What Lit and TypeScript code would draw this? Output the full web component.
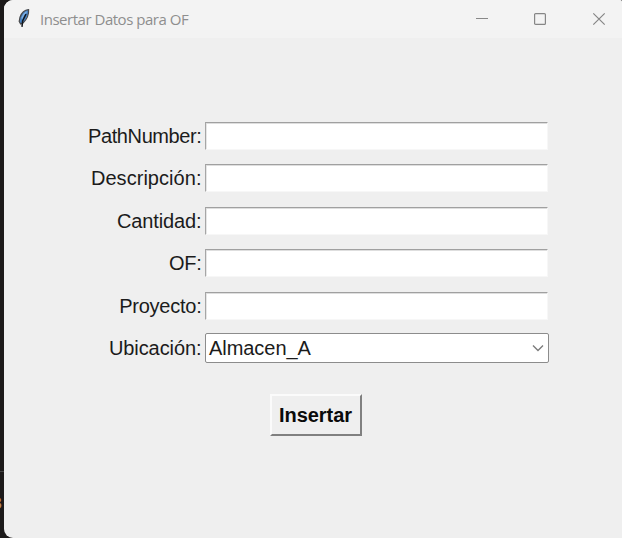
import { LitElement, html, css } from "lit";
import { customElement, property } from "lit/decorators.js";
import { styleMap } from "lit/directives/style-map.js";

@customElement("form-row")
class FormRow extends LitElement {
  @property() label = "";
  @property() value = "";
  @property({ type: Number }) tracking = 0;
  @property({ type: Boolean }) select = false;

  static styles = css`
    :host {
      display: grid;
      grid-template-columns: 197.5px 344px;
      column-gap: 3.5px;
      height: 42.5px;
      align-items: start;
      font: 20px/28px "Liberation Sans", Arial, sans-serif;
      color: #1b1b1b;
    }
    .label { text-align: right; white-space: nowrap; }
    .entry {
      box-sizing: border-box;
      width: 343px;
      height: 28px;
      background: #fff;
      border: 1px solid #f7f7f7;
      border-top-color: #a0a0a0;
      border-left-color: #a6a6a6;
      box-shadow: inset 0 1px #dedede, inset 1px 0 #e6e6e6;
    }
    .combo {
      box-sizing: border-box;
      display: flex;
      justify-content: space-between;
      align-items: center;
      width: 344px;
      height: 30px;
      margin-top: -1px;
      padding: 0 4px 0 3px;
      background: #fff;
      border: 1px solid #8c8c8c;
      border-radius: 2px;
      letter-spacing: -0.05px;
    }
    svg { display: block; }
  `;

  render() {
    return html`
      <div class="label" style=${styleMap({ letterSpacing: `${this.tracking}px` })}>${this.label}:</div>
      ${this.select
        ? html`<div class="combo">
            <span>${this.value}</span>
            <svg width="12" height="8" viewBox="0 0 12 8" fill="none" stroke="#7c7c7c" stroke-width="1.4">
              <path d="M1 1.5 L6 6.5 L11 1.5" />
            </svg>
          </div>`
        : html`<div class="entry"></div>`}
    `;
  }
}

const fields = [
  { label: "PathNumber", tracking: -0.4 },
  { label: "Descripción", tracking: 0.04 },
  { label: "Cantidad", tracking: -0.12 },
  { label: "OF", tracking: -0.3 },
  { label: "Proyecto", tracking: -0.24 },
];

@customElement("app-root")
class AppRoot extends LitElement {
  static styles = css`
    :host {
      display: flex;
      box-sizing: border-box;
      width: 622px;
      height: 538px;
      padding-left: 4px;
      overflow: hidden;
      position: relative;
      background: #1c1a1a;
    }
    .window {
      flex: 1;
      display: flex;
      flex-direction: column;
      background: #efefef;
      border-radius: 9px 2px 0 9px;
      overflow: hidden;
    }
    .bar {
      display: flex;
      align-items: center;
      height: 38px;
      box-sizing: border-box;
      padding: 0 16px 1px 13px;
      background: #f3f3f3;
      color: #8e8e8e;
    }
    .title {
      flex: 1;
      margin-left: 9px;
      font: 15px/20px "Open Sans", "Noto Sans", sans-serif;
      letter-spacing: -0.48px;
    }
    .controls { display: flex; padding-top: 1px; }
    .minimize { margin-right: 44px; }
    .maximize { margin-right: 45px; }
    svg { display: block; }
    .form { padding-top: 83.5px; }
    .actions { display: flex; padding: 17.5px 0 0 266px; }
    .button {
      box-sizing: border-box;
      width: 92px;
      height: 42px;
      border: 2px solid;
      border-color: #fbfbfb #808080 #808080 #fbfbfb;
      background: #efefef;
      font: bold 20px/38px "Liberation Sans", Arial, sans-serif;
      letter-spacing: -0.05px;
      text-indent: -1px;
      text-align: center;
      color: #0a0a0a;
    }
    .rule { position: absolute; left: 0; top: 471px; width: 4px; height: 1px; background: #444; }
    .glyph {
      position: absolute;
      left: -9px;
      top: 494px;
      width: 12px;
      overflow: hidden;
      font: 19px/20px "Liberation Mono", monospace;
      color: #b58a5c;
    }
  `;

  render() {
    return html`
      <div class="window">
        <div class="bar">
          <svg width="14" height="21" viewBox="0 0 14 21">
            <path d="M11.6 1.6 C8.2 1.8 4.6 4.6 3 9.2 L2.2 13.5 L3.6 16 L6 15 C9.6 11.5 12 6.5 11.6 1.6Z" fill="#4784c6" stroke="#4a4a4c" stroke-width="1.2" />
            <path d="M9 6 L5.6 13 L5 18.8" fill="none" stroke="#12161c" stroke-width="1.5" />
            <path d="M9.6 3.8 C7.2 5.4 5.6 7.6 4.8 10.5" fill="none" stroke="#86b4e4" stroke-width="1.2" />
          </svg>
          <div class="title">Insertar Datos para OF</div>
          <div class="controls">
            <svg class="minimize" width="14" height="14" viewBox="0 0 14 14" stroke="#888"><path d="M1 6.5H13" /></svg>
            <svg class="maximize" width="14" height="14" viewBox="0 0 14 14" fill="none" stroke="#868686" stroke-width="1.2"><rect x="1.6" y="1.6" width="10.8" height="10.8" rx="1" /></svg>
            <svg width="14" height="14" viewBox="0 0 14 14" stroke="#868686" stroke-width="1.2"><path d="M1.3 1.3L12.7 12.7M12.7 1.3L1.3 12.7" /></svg>
          </div>
        </div>
        <div class="form">
          ${fields.map(
            (f) => html`<form-row .label=${f.label} .tracking=${f.tracking}></form-row>`
          )}
          <form-row .label=${"Ubicación"} .tracking=${-0.08} .value=${"Almacen_A"} .select=${true}></form-row>
        </div>
        <div class="actions"><div class="button">Insertar</div></div>
      </div>
      <div class="rule"></div>
      <div class="glyph">8</div>
    `;
  }
}
